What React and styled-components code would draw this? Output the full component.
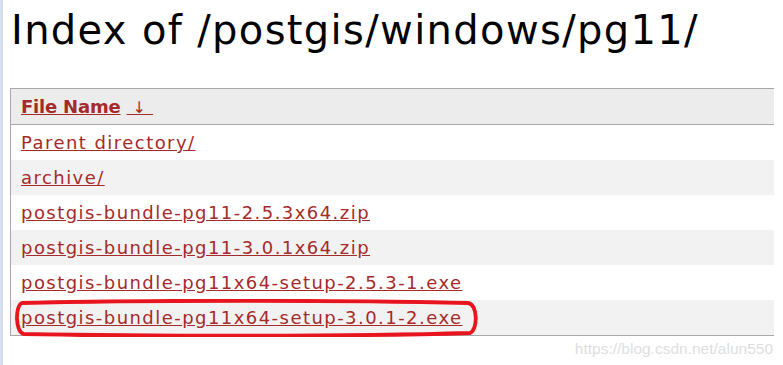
import React from "react";
import styled, { createGlobalStyle } from "styled-components";

const Global = createGlobalStyle`
  html, body { margin: 0; padding: 0; background: #fff; }
  body { font-family: "DejaVu Sans", Verdana, sans-serif; }
`;

const Page = styled.div`
  position: relative;
  min-height: 365px;
  border-left: 3px solid #d7dfeb;
  padding: 0 9px 0 7px;
  box-sizing: border-box;
`;

const Title = styled.h1`
  margin: 0;
  padding: 6px 0 0 1px;
  font-family: "DejaVu Sans", Verdana, sans-serif;
  font-weight: normal;
  font-size: 40px;
  line-height: 48px;
  letter-spacing: 1.35px;
  color: #000;
`;

const Table = styled.table`
  margin-top: 34px;
  width: 100%;
  border-collapse: collapse;
  border-left: 1px solid #a8a8a8;
  border-top: 1px solid #a8a8a8;
  border-bottom: 1px solid #a8a8a8;
`;

const HeadCell = styled.th`
  height: 35px;
  padding: 0 10px;
  text-align: left;
  background: #ececec;
  border-bottom: 1px solid #a8a8a8;
  font-size: 18px;
  font-weight: bold;
  letter-spacing: -0.2px;
`;

const Row = styled.tr`
  background: ${(p) => (p.$alt ? "#f2f2f2" : "#fff")};
`;

const Cell = styled.td`
  height: 35px;
  padding: 0 10px;
  font-size: 18px;
  letter-spacing: 1.45px;
`;

const Link = styled.a`
  color: #a52a2a;
  text-decoration: underline;
`;

const SortLink = styled(Link)`
  margin-left: 6px;
  font-size: 16px;
  font-weight: normal;
  letter-spacing: 1px;
`;

const Mark = styled.svg`
  position: absolute;
  left: 9px;
  top: 299px;
  pointer-events: none;
`;

const Watermark = styled.div`
  position: absolute;
  right: 10px;
  bottom: 7px;
  font-family: "Liberation Sans", Arial, sans-serif;
  font-size: 15.5px;
  color: #dedede;
`;

const files = [
  "Parent directory/",
  "archive/",
  "postgis-bundle-pg11-2.5.3x64.zip",
  "postgis-bundle-pg11-3.0.1x64.zip",
  "postgis-bundle-pg11x64-setup-2.5.3-1.exe",
  "postgis-bundle-pg11x64-setup-3.0.1-2.exe",
];

export default function App() {
  return (
    <>
      <Global />
      <Page>
        <Title>Index of /postgis/windows/pg11/</Title>
        <Table>
          <thead>
            <tr>
              <HeadCell>
                <Link href="#">File Name</Link>
                <SortLink href="#">{"\u00a0↓\u00a0"}</SortLink>
              </HeadCell>
            </tr>
          </thead>
          <tbody>
            {files.map((f, i) => (
              <Row key={f} $alt={i % 2 === 1}>
                <Cell>
                  <Link href="#">{f}</Link>
                </Cell>
              </Row>
            ))}
          </tbody>
        </Table>
        <Mark width="468" height="38" viewBox="0 0 468 38">
          <path
            d="M10 4 C120 1 330 1 456 4 C466 5 466 31 458 34 C330 38 120 37 12 35 C3 34 3 6 10 4 Z"
            fill="none"
            stroke="#e8141e"
            strokeWidth="3.8"
          />
        </Mark>
        <Watermark>https://blog.csdn.net/alun550</Watermark>
      </Page>
    </>
  );
}
